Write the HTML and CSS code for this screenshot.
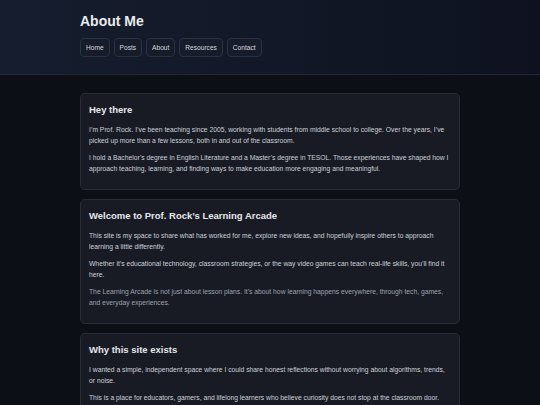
FILE: index.html
```html
<!DOCTYPE html>
<html lang="en">
<head>
<meta charset="utf-8">
<title>About Me</title>
<link rel="stylesheet" href="styles.css">
</head>
<body>
<header class="site-header">
  <div class="wrap">
    <h1 class="title">About Me</h1>
    <nav class="nav">
      <a class="nav-btn" href="#">Home</a>
      <a class="nav-btn" href="#">Posts</a>
      <a class="nav-btn" href="#">About</a>
      <a class="nav-btn" href="#">Resources</a>
      <a class="nav-btn" href="#">Contact</a>
    </nav>
  </div>
</header>
<main class="wrap content">
  <section class="card">
    <h2>Hey there</h2>
    <p>I’m Prof. Rock. I’ve been teaching since 2005, working with students from middle school to college. Over the years, I’ve picked up more than a few lessons, both in and out of the classroom.</p>
    <p>I hold a Bachelor’s degree in English Literature and a Master’s degree in TESOL. Those experiences have shaped how I approach teaching, learning, and finding ways to make education more engaging and meaningful.</p>
  </section>
  <section class="card">
    <h2>Welcome to Prof. Rock’s Learning Arcade</h2>
    <p>This site is my space to share what has worked for me, explore new ideas, and hopefully inspire others to approach learning a little differently.</p>
    <p>Whether it’s educational technology, classroom strategies, or the way video games can teach real-life skills, you’ll find it here.</p>
    <p class="muted">The Learning Arcade is not just about lesson plans. It’s about how learning happens everywhere, through tech, games, and everyday experiences.</p>
  </section>
  <section class="card">
    <h2>Why this site exists</h2>
    <p>I wanted a simple, independent space where I could share honest reflections without worrying about algorithms, trends, or noise.</p>
    <p>This is a place for educators, gamers, and lifelong learners who believe curiosity does not stop at the classroom door.</p>
  </section>
</main>
</body>
</html>
```
FILE: styles.css
```css
* { box-sizing: border-box; }
html, body { margin: 0; padding: 0; }
body {
  background: #0c0f16;
  color: #cdd1d8;
  font-family: "Liberation Sans", Arial, sans-serif;
  font-size: 6.75px;
  line-height: 11px;
}
.wrap {
  width: 380px;
  margin: 0 auto;
}
.site-header {
  background: linear-gradient(90deg, #161d2e 0%, #121827 50%, #0e1220 100%);
  border-bottom: 1px solid #232836;
  padding: 13px 0 17px;
}
.title {
  margin: 0 0 9px;
  font-size: 14px;
  line-height: 16px;
  font-weight: bold;
  color: #e9ebef;
}
.nav {
  display: flex;
  gap: 4px;
}
.nav-btn {
  display: block;
  height: 19px;
  line-height: 17px;
  padding: 0 5px;
  border: 1px solid #2a3140;
  border-radius: 4px;
  background: #161c29;
  color: #d6d9df;
  text-decoration: none;
  font-size: 6.6px;
}
.content {
  padding-top: 18px;
  display: flex;
  flex-direction: column;
  gap: 9px;
}
.card {
  background: #181b24;
  border: 1px solid #292d37;
  border-radius: 5px;
  padding: 9px 8px 9px;
}
.card h2 {
  margin: 0 0 8px;
  font-size: 9.5px;
  line-height: 13px;
  font-weight: bold;
  color: #e6e8ec;
}
.card p {
  margin: 0 0 6px;
}
.card p.muted {
  color: #9ea3ad;
}
```
